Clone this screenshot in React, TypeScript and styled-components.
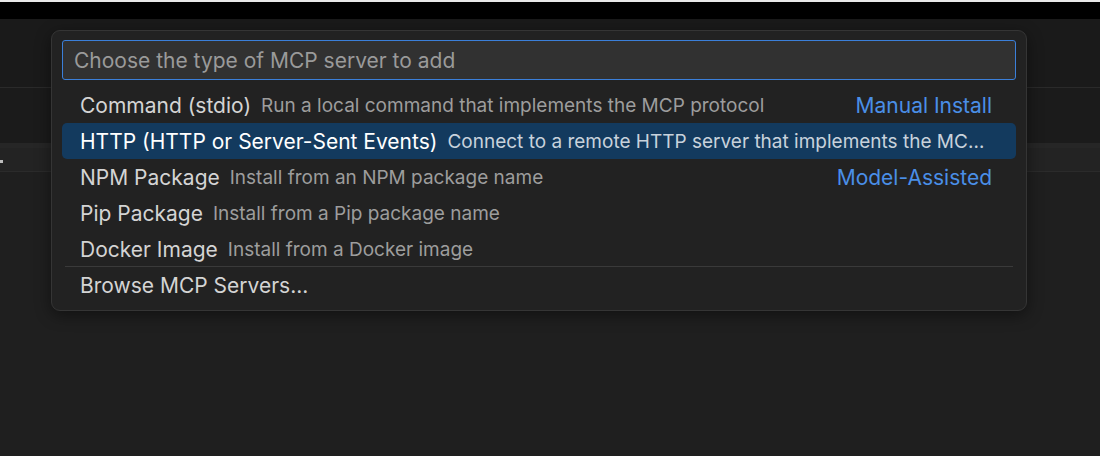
import React from 'react';
import styled, { createGlobalStyle } from 'styled-components';

const GlobalStyle = createGlobalStyle`
  html, body {
    margin: 0;
    padding: 0;
    background: #1f1f1f;
  }
  body {
    font-family: Inter, "Noto Sans", "Liberation Sans", sans-serif;
    -webkit-font-smoothing: antialiased;
  }
`;

type Item = {
  label: string;
  description: string;
  badge?: string;
  active?: boolean;
};

const items: Item[] = [
  {
    label: 'Command (stdio)',
    description: 'Run a local command that implements the MCP protocol',
    badge: 'Manual Install',
  },
  {
    label: 'HTTP (HTTP or Server-Sent Events)',
    description: 'Connect to a remote HTTP server that implements the MCP protocol',
    active: true,
  },
  {
    label: 'NPM Package',
    description: 'Install from an NPM package name',
    badge: 'Model-Assisted',
  },
  { label: 'Pip Package', description: 'Install from a Pip package name' },
  { label: 'Docker Image', description: 'Install from a Docker image' },
];

function App() {
  return (
    <>
      <GlobalStyle />
      <Page>
        <TopEdge />
        <TitleBar />
        <HeaderArea />
        <EditorArea />
        <Band />
        <TabRow>
          <Dot />
        </TabRow>
        <Rest />

        <Palette>
          <SearchBox placeholder="Choose the type of MCP server to add" />
          <List>
            {items.map((item) => (
              <Row key={item.label} $active={item.active}>
                <Label>{item.label}</Label>
                <Description $active={item.active}>{item.description}</Description>
                {item.badge && <Badge>{item.badge}</Badge>}
              </Row>
            ))}
            <Separator />
            <Row>
              <Label>Browse MCP Servers...</Label>
            </Row>
          </List>
        </Palette>
      </Page>
    </>
  );
}

export default App;

const Page = styled.div`
  position: relative;
  width: 1100px;
  height: 456px;
  overflow: hidden;
  display: flex;
  flex-direction: column;
  background: #1f1f1f;
`;

const TopEdge = styled.div`
  height: 2px;
  background: #e9e9e9;
`;

const TitleBar = styled.div`
  height: 17px;
  background: #000000;
`;

const HeaderArea = styled.div`
  height: 68px;
  background: #1a1a1a;
  border-bottom: 1px solid #2a2a2a;
`;

const EditorArea = styled.div`
  height: 55px;
  background: #1b1b1b;
`;

const Band = styled.div`
  height: 5px;
  background: #262626;
`;

const TabRow = styled.div`
  height: 23px;
  background: #232323;
  border-bottom: 1px solid #2b2b2b;
  display: flex;
  align-items: center;
`;

const Dot = styled.span`
  width: 3px;
  height: 3px;
  margin-top: 4px;
  background: #bdbdbd;
`;

const Rest = styled.div`
  flex: 1;
  background: #1f1f1f;
`;

const Palette = styled.div`
  position: absolute;
  left: 51px;
  top: 30px;
  width: 976px;
  box-sizing: border-box;
  padding: 10px 10px 7px;
  background: #222222;
  border: 1px solid #353535;
  border-radius: 9px;
  box-shadow: 0 4px 16px rgba(0, 0, 0, 0.45);
  display: flex;
  flex-direction: column;
`;

const SearchBox = styled.input`
  height: 40px;
  box-sizing: border-box;
  padding: 0 11px;
  margin-top: -1px;
  background: #313131;
  border: 1px solid #3b7fd9;
  border-radius: 3px;
  outline: none;
  color: #cccccc;
  font-family: inherit;
  font-size: 21px;

  &::placeholder {
    color: #9a9a9a;
  }
`;

const List = styled.div`
  margin-top: 7px;
  display: flex;
  flex-direction: column;
`;

const Row = styled.div<{ $active?: boolean }>`
  height: 36px;
  display: flex;
  align-items: center;
  padding: 0 24px 0 18px;
  border-radius: 5px;
  background: ${({ $active }) => ($active ? '#133a5e' : 'transparent')};
  color: ${({ $active }) => ($active ? '#ffffff' : '#d4d4d4')};
  white-space: nowrap;
  overflow: hidden;
`;

const Label = styled.span`
  flex-shrink: 0;
  font-size: 21px;
`;

const Description = styled.span<{ $active?: boolean }>`
  flex: 1;
  min-width: 0;
  margin-left: 10px;
  overflow: hidden;
  text-overflow: ellipsis;
  font-size: 19px;
  color: ${({ $active }) => ($active ? '#c8d2dc' : '#9d9d9d')};
`;

const Badge = styled.span`
  flex-shrink: 0;
  margin-left: 12px;
  font-size: 21px;
  color: #4a8fe7;
`;

const Separator = styled.div`
  height: 1px;
  margin: -1px 3px 0;
  background: #3a3a3a;
`;
